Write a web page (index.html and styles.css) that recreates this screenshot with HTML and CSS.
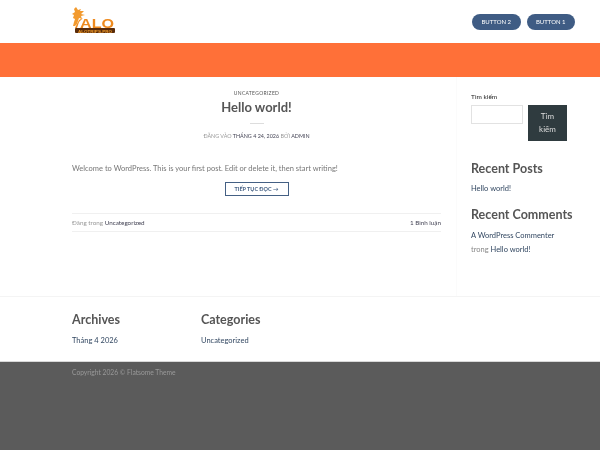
FILE: index.html
```html
<!DOCTYPE html>
<html lang="vi">
<head>
    <meta charset="UTF-8">
    <meta name="viewport" content="width=device-width, initial-scale=1.0">
    <title>Hello world!</title>
    <link rel="stylesheet" href="styles.css">
</head>
<body>
<header class="header">
    <a href="#" class="logo">
        <svg width="44" height="30" viewBox="0 0 44 30">
            <path d="M4 2 L6 5 L9 4 L8 6 L12 6 L9 9 L13 10 L9 11 L10 14 L7 13 L6 16 L5 19 L3 21 L1 21 L2 17 L3 14 L1 13 L2 10 L0 9 L3 7 L2 4 Z" fill="#f29a2e"/>
            <path d="M3 23 L7 15 L11 13 L7 17 L5 23 Z" fill="#f08a1c"/>
            <rect x="3" y="23" width="40" height="5" rx="1" fill="#5a2c0a"/>
            <text x="8" y="22.5" class="logo-text" textLength="34" lengthAdjust="spacingAndGlyphs">ALO</text>
            <text x="6" y="27.7" class="logo-sub" textLength="34" lengthAdjust="spacingAndGlyphs">ALOTRIPS.PRO</text>
        </svg>
    </a>
    <div class="header-buttons">
        <a href="#" class="pill">BUTTON 2</a>
        <a href="#" class="pill">BUTTON 1</a>
    </div>
</header>
<div class="band"></div>

<div class="content">
    <main class="post">
        <div class="post-head">
            <div class="post-cat">UNCATEGORIZED</div>
            <h1 class="post-title">Hello world!</h1>
            <div class="divider"></div>
            <div class="post-meta">ĐĂNG VÀO <span class="dark">THÁNG 4 24, 2026</span> BỞI <span class="dark">ADMIN</span></div>
        </div>
        <p class="post-text">Welcome to WordPress. This is your first post. Edit or delete it, then start writing!</p>
        <div class="more-wrap"><a href="#" class="more">TIẾP TỤC ĐỌC →</a></div>
        <div class="post-foot">
            <span>Đăng trong <span class="dark">Uncategorized</span></span>
            <span class="dark">1 Bình luận</span>
        </div>
    </main>
    <aside class="sidebar">
        <div class="search-label">Tìm kiếm</div>
        <div class="search-row">
            <input type="text" class="search-input">
            <button class="search-btn">Tìm kiếm</button>
        </div>
        <h2 class="widget-title first">Recent Posts</h2>
        <div class="widget-line recent-post"><a href="#">Hello world!</a></div>
        <h2 class="widget-title">Recent Comments</h2>
        <div class="widget-line comment-author"><a href="#">A WordPress Commenter</a></div>
        <div class="widget-line comment-post">trong <a href="#">Hello world!</a></div>
    </aside>
</div>

<section class="footer-widgets">
    <div class="footer-col">
        <h2 class="widget-title">Archives</h2>
        <div class="widget-line"><a href="#">Tháng 4 2026</a></div>
    </div>
    <div class="footer-col">
        <h2 class="widget-title">Categories</h2>
        <div class="widget-line"><a href="#">Uncategorized</a></div>
    </div>
</section>

<footer class="footer">Copyright 2026 © Flatsome Theme</footer>
</body>
</html>
```

FILE: styles.css
```css
html, body {
    height: 100%;
}
body {
    margin: 0;
    display: flex;
    flex-direction: column;
    font-family: Lato, "Open Sans", sans-serif;
    font-size: 8px;
    color: #777;
    background-color: #fff;
    filter: blur(0.5px);
}
a {
    color: #334862;
    text-decoration: none;
}
.header {
    height: 43px;
    padding: 0 25px 0 72px;
    display: flex;
    align-items: center;
    justify-content: space-between;
    box-sizing: border-box;
}
.logo {
    display: block;
    height: 30px;
    align-self: flex-start;
    margin-top: 5px;
}
.logo-text {
    font-family: "Liberation Sans", sans-serif;
    font-size: 13px;
    font-weight: bold;
    fill: #ee8a1e;
}
.logo-sub {
    font-family: "Liberation Sans", sans-serif;
    font-size: 3px;
    font-weight: bold;
    fill: #f09a2a;
}
.header-buttons {
    display: flex;
    gap: 6px;
}
.pill {
    height: 16px;
    width: 48.5px;
    border-radius: 8px;
    background-color: #3f5c84;
    color: #fff;
    font-size: 6px;
    line-height: 16px;
    text-align: center;
}
.band {
    height: 34px;
    background-color: #ff7038;
}
.content {
    display: flex;
    height: 219px;
    padding-left: 72px;
}
.post {
    width: 369px;
    padding-top: 13px;
}
.post-head {
    text-align: center;
}
.post-cat {
    font-size: 5px;
    line-height: 6px;
    color: #555;
    letter-spacing: 0.3px;
}
.post-title {
    margin: 3px 0 0;
    font-size: 13px;
    line-height: 17px;
    font-weight: bold;
    color: #555;
}
.divider {
    width: 14px;
    height: 1px;
    margin: 7px auto 0;
    background-color: #ddd;
}
.post-meta {
    margin-top: 9px;
    font-size: 5.4px;
    line-height: 7px;
    color: #999;
}
.dark {
    color: #445;
}
.post-text {
    margin: 23px 0 0;
    font-size: 7.5px;
    line-height: 12px;
}
.more-wrap {
    margin-top: 7px;
    text-align: center;
}
.more {
    display: inline-block;
    height: 14px;
    width: 64px;
    box-sizing: border-box;
    border: 1px solid #446084;
    color: #446084;
    font-size: 5.5px;
    font-weight: bold;
    line-height: 12px;
}
.post-foot {
    margin-top: 17px;
    height: 17px;
    border-top: 1px solid #f0f0f0;
    border-bottom: 1px solid #f0f0f0;
    display: flex;
    justify-content: space-between;
    align-items: center;
    font-size: 6.3px;
    color: #999;
}
.sidebar {
    margin-left: 15px;
    padding: 15px 0 0 14px;
    width: 115px;
    border-left: 1px solid #fbfbfb;
}
.search-label {
    margin-top: 1px;
    font-size: 6.5px;
    line-height: 8px;
    color: #222;
}
.search-row {
    display: flex;
    gap: 5px;
    margin-top: 4px;
    align-items: flex-start;
}
.search-input {
    width: 52px;
    height: 19px;
    padding: 0;
    box-sizing: border-box;
    border: 1px solid #e2e2e2;
    background-color: #fff;
}
.search-btn {
    width: 39px;
    height: 36px;
    padding: 0 8px;
    border: 0;
    background-color: #2f3b3f;
    color: #ddd;
    font-family: inherit;
    font-size: 8px;
    line-height: 13px;
}
.widget-title {
    margin: 13px 0 0;
    font-size: 12.5px;
    line-height: 16px;
    font-weight: bold;
    color: #555;
}
.widget-title.first {
    margin-top: 20px;
}
.widget-line {
    margin-top: 8px;
    font-size: 7.5px;
    line-height: 10px;
    color: #888;
}
.recent-post {
    margin-top: 7px;
}
.comment-author {
    margin-top: 8px;
}
.comment-post {
    margin-top: 4px;
}
.footer-widgets {
    display: flex;
    height: 65px;
    padding: 15px 0 0 72px;
    box-sizing: border-box;
    border-top: 1px solid #f4f4f4;
}
.footer-col {
    width: 129px;
}
.footer-widgets .widget-title {
    margin-top: 0;
}
.footer {
    flex: 1;
    padding: 6px 0 0 72px;
    background-color: #5b5b5b;
    border-top: 1px solid #d8d8d8;
    font-size: 6.7px;
    line-height: 9px;
    color: #999;
}
```
